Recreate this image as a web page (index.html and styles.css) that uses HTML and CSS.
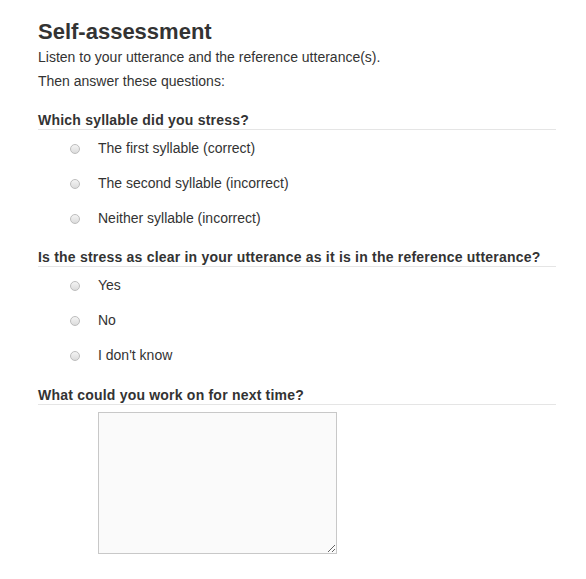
FILE: index.html
```html
<!DOCTYPE html>
<html>
<head>
<meta charset="utf-8">
<link rel="stylesheet" href="styles.css">
</head>
<body>
<div class="page">
  <h1 class="title">Self-assessment</h1>
  <p class="intro">Listen to your utterance and the reference utterance(s).</p>
  <p class="intro">Then answer these questions:</p>

  <section class="question">
    <h2 class="q-head">Which syllable did you stress?</h2>
    <div class="options">
      <label class="option"><input type="radio" name="q1" class="radio"><span>The first syllable (correct)</span></label>
      <label class="option"><input type="radio" name="q1" class="radio"><span>The second syllable (incorrect)</span></label>
      <label class="option"><input type="radio" name="q1" class="radio"><span>Neither syllable (incorrect)</span></label>
    </div>
  </section>

  <section class="question">
    <h2 class="q-head">Is the stress as clear in your utterance as it is in the reference utterance?</h2>
    <div class="options">
      <label class="option"><input type="radio" name="q2" class="radio"><span>Yes</span></label>
      <label class="option"><input type="radio" name="q2" class="radio"><span>No</span></label>
      <label class="option"><input type="radio" name="q2" class="radio"><span>I don't know</span></label>
    </div>
  </section>

  <section class="question question-last">
    <h2 class="q-head">What could you work on for next time?</h2>
    <textarea class="notes"></textarea>
  </section>
</div>
</body>
</html>
```

FILE: styles.css
```css
html, body {
  margin: 0;
  padding: 0;
  background: #ffffff;
}

.page {
  width: 518px;
  margin-left: 38px;
  padding-top: 20px;
  font-family: "Liberation Sans", Arial, Helvetica, sans-serif;
  color: #333333;
}

.title {
  margin: 0 0 3px 0;
  font-size: 22px;
  line-height: 24px;
  font-weight: bold;
  color: #333333;
}

.intro {
  margin: 0 0 4px 0;
  font-size: 14px;
  line-height: 20px;
}

.question {
  margin-top: 20px;
}

.question-last {
  margin-top: 21px;
}

.q-head {
  margin: 0;
  font-size: 14px;
  line-height: 18px;
  font-weight: bold;
  letter-spacing: 0.21px;
  color: #333333;
  border-bottom: 1px solid #e5e5e5;
}

.options {
  display: flex;
  flex-direction: column;
  gap: 15px;
  padding-top: 8px;
}

.option {
  display: flex;
  align-items: center;
  height: 20px;
  font-size: 14px;
  line-height: 20px;
  color: #333333;
}

.radio {
  -webkit-appearance: none;
  appearance: none;
  width: 10px;
  height: 10px;
  margin: 1px 18px 0 32px;
  border-radius: 50%;
  border: 1px solid #bdbdbd;
  background: linear-gradient(#f4f4f4, #dcdcdc);
  box-sizing: border-box;
  flex: none;
}

.notes {
  display: block;
  box-sizing: border-box;
  width: 239px;
  height: 142px;
  margin: 7px 0 0 60px;
  border: 1px solid #c8c8c8;
  background: #fafafa;
  border-radius: 0;
  padding: 4px;
  font-family: "Liberation Sans", Arial, sans-serif;
  font-size: 14px;
}
```
